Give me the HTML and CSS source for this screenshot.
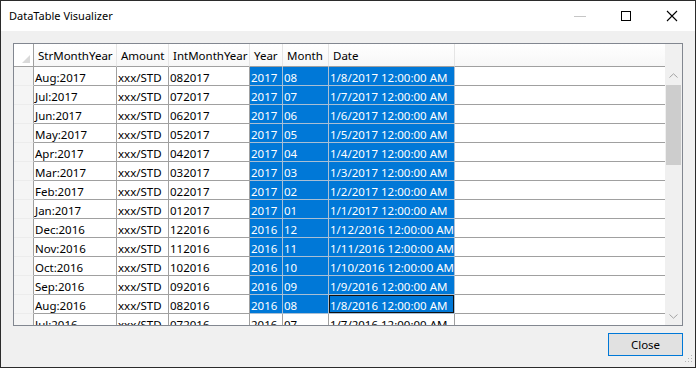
FILE: index.html
```html
<!DOCTYPE html>
<html>
<head>
<meta charset="utf-8">
<link rel="stylesheet" href="styles.css">
</head>
<body>
<div class="window">
  <div class="titlebar">
    <span class="title">DataTable Visualizer</span>
    <div class="controls">
      <span class="ctl"><svg width="12" height="12" viewBox="0 0 12 12"><path d="M0 6.5H12" stroke="#c6c6c6" stroke-width="1"/></svg></span>
      <span class="ctl"><svg width="12" height="12" viewBox="0 0 12 12"><rect x="1.5" y="1.5" width="9" height="9" fill="none" stroke="#000" stroke-width="1"/></svg></span>
      <span class="ctl"><svg width="12" height="12" viewBox="0 0 12 12"><path d="M1 1L11 11M11 1L1 11" stroke="#000" stroke-width="1.1"/></svg></span>
    </div>
  </div>
  <div class="body">
    <div class="grid">
      <div class="viewport">
        <table class="dgv">
          <colgroup>
            <col class="c-rh"><col class="c-str"><col class="c-amt"><col class="c-int"><col class="c-yr"><col class="c-mo"><col class="c-date"><col class="c-fill">
          </colgroup>
          <thead>
            <tr>
              <th class="rh corner"><svg width="8" height="8" viewBox="0 0 8 8"><path d="M8 0V8H0Z" fill="#d9d9d9"/></svg></th>
              <th>StrMonthYear</th><th>Amount</th><th>IntMonthYear</th><th>Year</th><th>Month</th><th>Date</th><th class="fill"></th>
            </tr>
          </thead>
          <tbody>
            <tr><td class="rh"></td><td>Aug:2017</td><td>xxx/STD</td><td>082017</td><td class="sel">2017</td><td class="sel">08</td><td class="sel">1/8/2017 12:00:00 AM</td><td class="fill"></td></tr>
            <tr><td class="rh"></td><td>Jul:2017</td><td>xxx/STD</td><td>072017</td><td class="sel">2017</td><td class="sel">07</td><td class="sel">1/7/2017 12:00:00 AM</td><td class="fill"></td></tr>
            <tr><td class="rh"></td><td>Jun:2017</td><td>xxx/STD</td><td>062017</td><td class="sel">2017</td><td class="sel">06</td><td class="sel">1/6/2017 12:00:00 AM</td><td class="fill"></td></tr>
            <tr><td class="rh"></td><td>May:2017</td><td>xxx/STD</td><td>052017</td><td class="sel">2017</td><td class="sel">05</td><td class="sel">1/5/2017 12:00:00 AM</td><td class="fill"></td></tr>
            <tr><td class="rh"></td><td>Apr:2017</td><td>xxx/STD</td><td>042017</td><td class="sel">2017</td><td class="sel">04</td><td class="sel">1/4/2017 12:00:00 AM</td><td class="fill"></td></tr>
            <tr><td class="rh"></td><td>Mar:2017</td><td>xxx/STD</td><td>032017</td><td class="sel">2017</td><td class="sel">03</td><td class="sel">1/3/2017 12:00:00 AM</td><td class="fill"></td></tr>
            <tr><td class="rh"></td><td>Feb:2017</td><td>xxx/STD</td><td>022017</td><td class="sel">2017</td><td class="sel">02</td><td class="sel">1/2/2017 12:00:00 AM</td><td class="fill"></td></tr>
            <tr><td class="rh"></td><td>Jan:2017</td><td>xxx/STD</td><td>012017</td><td class="sel">2017</td><td class="sel">01</td><td class="sel">1/1/2017 12:00:00 AM</td><td class="fill"></td></tr>
            <tr><td class="rh"></td><td>Dec:2016</td><td>xxx/STD</td><td>122016</td><td class="sel">2016</td><td class="sel">12</td><td class="sel">1/12/2016 12:00:00 AM</td><td class="fill"></td></tr>
            <tr><td class="rh"></td><td>Nov:2016</td><td>xxx/STD</td><td>112016</td><td class="sel">2016</td><td class="sel">11</td><td class="sel">1/11/2016 12:00:00 AM</td><td class="fill"></td></tr>
            <tr><td class="rh"></td><td>Oct:2016</td><td>xxx/STD</td><td>102016</td><td class="sel">2016</td><td class="sel">10</td><td class="sel">1/10/2016 12:00:00 AM</td><td class="fill"></td></tr>
            <tr><td class="rh"></td><td>Sep:2016</td><td>xxx/STD</td><td>092016</td><td class="sel">2016</td><td class="sel">09</td><td class="sel">1/9/2016 12:00:00 AM</td><td class="fill"></td></tr>
            <tr><td class="rh"></td><td>Aug:2016</td><td>xxx/STD</td><td>082016</td><td class="sel">2016</td><td class="sel">08</td><td class="sel focus">1/8/2016 12:00:00 AM</td><td class="fill"></td></tr>
            <tr><td class="rh"></td><td>Jul:2016</td><td>xxx/STD</td><td>072016</td><td>2016</td><td>07</td><td>1/7/2016 12:00:00 AM</td><td class="fill"></td></tr>
          </tbody>
        </table>
      </div>
      <div class="vscroll">
        <div class="sb-head"></div>
        <div class="sb-btn"><svg width="9" height="5" viewBox="0 0 9 5"><path d="M0.5 4.5L4.5 0.8L8.5 4.5" fill="none" stroke="#a3a3a3" stroke-width="1"/></svg></div>
        <div class="sb-track">
          <div class="sb-thumb"></div>
        </div>
        <div class="sb-btn"><svg width="9" height="5" viewBox="0 0 9 5"><path d="M0.5 0.5L4.5 4.2L8.5 0.5" fill="none" stroke="#a3a3a3" stroke-width="1"/></svg></div>
      </div>
    </div>
    <div class="actions">
      <button class="btn">Close</button>
    </div>
    <span class="grip"><svg width="10" height="10" viewBox="0 0 10 10" fill="#b5b5b5"><rect x="8" y="0" width="1" height="1"/><rect x="5" y="3" width="1" height="1"/><rect x="8" y="3" width="1" height="1"/><rect x="2" y="6" width="1" height="1"/><rect x="5" y="6" width="1" height="1"/><rect x="8" y="6" width="1" height="1"/></svg></span>
  </div>
</div>
</body>
</html>
```

FILE: styles.css
```css
* { box-sizing: border-box; }
html, body { margin: 0; padding: 0; background: #ffffff; }
body {
  font-family: "Noto Sans", "Open Sans", "Liberation Sans", sans-serif;
  font-size: 11.5px;
  color: #000;
}
.window {
  width: 696px;
  height: 368px;
  border: 1px solid #2b2b2b;
  display: flex;
  flex-direction: column;
  background: #f0f0f0;
}
.titlebar {
  height: 30px;
  flex: none;
  background: #ffffff;
  display: flex;
  align-items: center;
  justify-content: space-between;
}
.title {
  padding-left: 8px;
  padding-bottom: 1px;
  font-size: 11px;
}
.controls {
  display: flex;
  height: 100%;
  align-items: center;
}
.ctl {
  width: 46px;
  height: 30px;
  display: flex;
  align-items: center;
  justify-content: center;
}
.ctl svg { display: block; }
.body {
  flex: 1;
  position: relative;
  padding: 12px 12px 0 12px;
  display: flex;
  flex-direction: column;
}
.grid {
  width: 670px;
  height: 283px;
  border: 1px solid #828790;
  background: #ffffff;
  display: flex;
  overflow: hidden;
}
.viewport {
  width: 651px;
  height: 281px;
  overflow: hidden;
}
.dgv {
  border-collapse: separate;
  border-spacing: 0;
  table-layout: fixed;
  width: 651px;
}
.c-rh { width: 20px; }
.c-str { width: 83px; }
.c-amt { width: 52px; }
.c-int { width: 81px; }
.c-yr { width: 33px; }
.c-mo { width: 46px; }
.c-date { width: 126px; }
.c-fill { width: 210px; }
.dgv th {
  height: 23px;
  padding: 0 0 0 4px;
  font-weight: normal;
  text-align: left;
  white-space: nowrap;
  overflow: hidden;
  background: linear-gradient(#ffffff, #f7f7f7);
  border-right: 1px solid #e5e5e5;
  border-bottom: 1px solid #a0a0a0;
}
.dgv th.fill { border-right: none; }
.dgv th.corner {
  padding: 0;
  background: #ffffff;
  border-right: 1px solid #a0a0a0;
  vertical-align: bottom;
  text-align: right;
}
.dgv th.corner svg { display: block; margin: 0 3px 3px auto; }
.dgv td {
  height: 19px;
  padding: 2px 0 0 1px;
  white-space: nowrap;
  overflow: hidden;
  border-right: 1px solid #a0a0a0;
  border-bottom: 1px solid #a0a0a0;
  line-height: 15px;
}
.dgv td.rh {
  background: #f5f5f5;
  border-bottom: 1px solid #ececec;
}
.dgv td.fill { border-right: none; }
.dgv td.sel {
  background: #0078d7;
  color: #ffffff;
  border-right-color: #a9bfd4;
  border-bottom-color: #a9bfd4;
}
.dgv td.focus {
  box-shadow: inset 0 0 0 1px #111111;
}
.vscroll {
  width: 17px;
  height: 281px;
  background: #f0f0f0;
  display: flex;
  flex-direction: column;
}
.sb-head { height: 23px; flex: none; }
.sb-btn {
  height: 17px;
  flex: none;
  display: flex;
  align-items: center;
  justify-content: center;
}
.sb-btn svg { display: block; }
.sb-track {
  flex: 1;
  padding: 1px 1px 0 1px;
}
.sb-thumb {
  height: 80px;
  background: #cdcdcd;
}
.actions {
  display: flex;
  justify-content: flex-end;
  padding-top: 7px;
  width: 670px;
}
.btn {
  width: 75px;
  height: 23px;
  border: 1px solid #0078d7;
  background: #e1e1e1;
  font-family: inherit;
  font-size: 11.5px;
  color: #000;
  padding: 0;
}
.grip {
  position: absolute;
  right: 2px;
  bottom: 2px;
}
.grip svg { display: block; }
```
